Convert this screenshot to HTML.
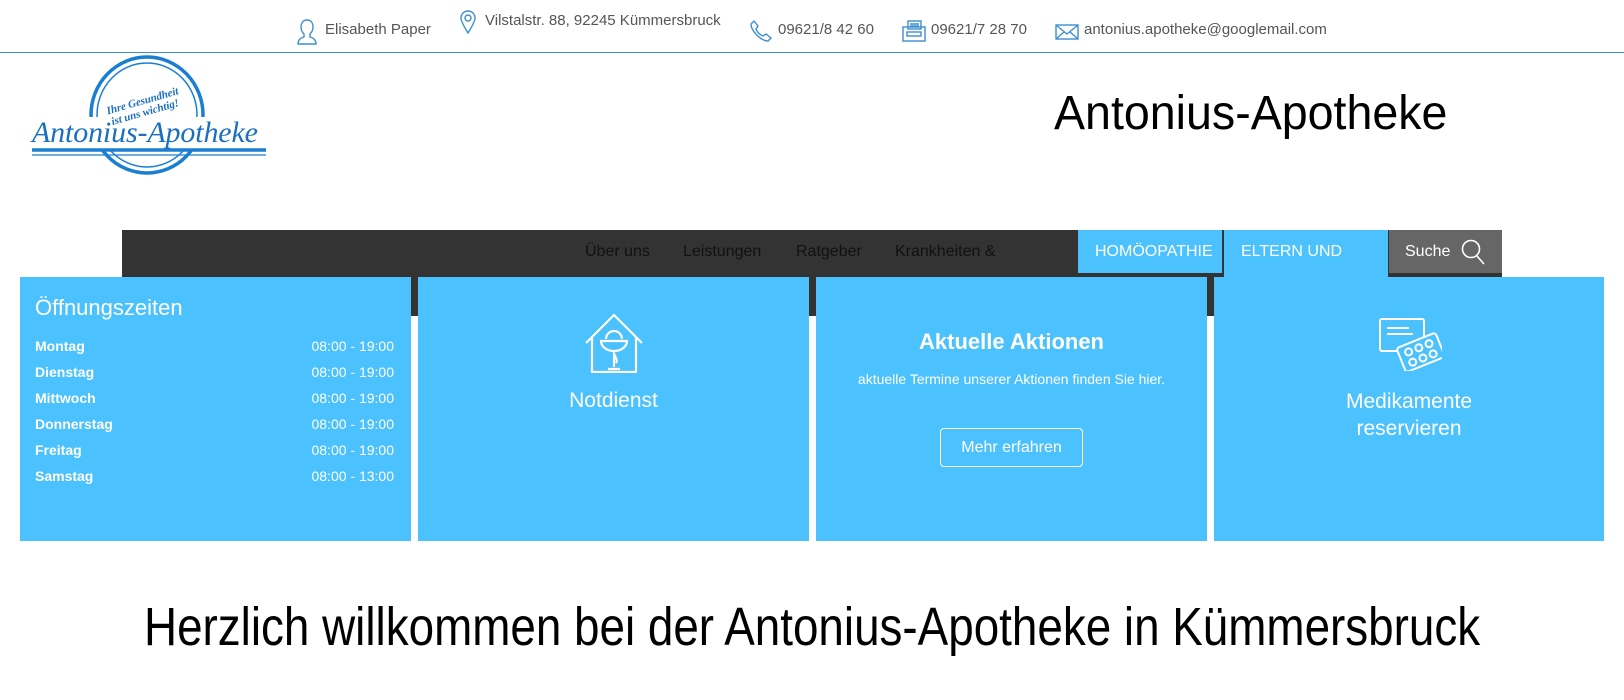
<!DOCTYPE html>
<html><head><meta charset="utf-8"><style>
*{margin:0;padding:0;box-sizing:border-box}
body{width:1624px;height:700px;overflow:hidden;background:#fff;font-family:"Liberation Sans",sans-serif;position:relative;color:#000}
.a{position:absolute;white-space:nowrap}
.top{font-size:15px;color:#555}
.card{position:absolute;top:277px;height:264px;background:#4bc1fd;color:#fff}
.row{position:absolute;left:15px;right:17px;font-size:14px}
.row b{font-weight:bold}
.row span{position:absolute;right:0;top:0}
.nav{font-size:16px;color:#111;top:243px}
</style></head><body>
<!-- top bar -->
<svg class="a" style="left:297px;top:19px" width="20" height="26" viewBox="0 0 20 26" fill="none" stroke="#3d8fd0" stroke-width="1.4"><path d="M10 1c-4 0-6 3-6 7 0 3 1 5 3 7v3c-4 1-6 3-6 7h18c0-4-2-6-6-7v-3c2-2 3-4 3-7 0-4-2-7-6-7z"/></svg>
<div class="a top" style="left:325px;top:21px">Elisabeth Paper</div>
<svg class="a" style="left:459px;top:10px" width="18" height="24" viewBox="0 0 18 24" fill="none" stroke="#3d8fd0" stroke-width="1.4"><path d="M9 23C4 15 2 11 2 8a7 7 0 0 1 14 0c0 3-2 7-7 15z"/><circle cx="9" cy="8" r="3"/></svg>
<div class="a top" style="left:485px;top:12px">Vilstalstr. 88, 92245 Kümmersbruck</div>
<svg class="a" style="left:749px;top:19px" width="24" height="24" viewBox="0 0 24 24" fill="none" stroke="#3d8fd0" stroke-width="1.4"><path d="M5 2l4 5-2 3c1 3 4 6 7 7l3-2 5 4-3 3C12 22 2 12 2 5z"/></svg>
<div class="a top" style="left:778px;top:21px">09621/8 42 60</div>
<svg class="a" style="left:902px;top:20px" width="24" height="22" viewBox="0 0 24 22" fill="none" stroke="#3d8fd0" stroke-width="1.4"><rect x="1" y="7" width="22" height="14"/><rect x="6" y="1" width="13" height="8"/><path d="M8 4h9M8 6h9"/><rect x="5" y="12" width="14" height="4"/></svg>
<div class="a top" style="left:931px;top:21px">09621/7 28 70</div>
<svg class="a" style="left:1055px;top:24px" width="24" height="16" viewBox="0 0 24 16" fill="none" stroke="#3d8fd0" stroke-width="1.4"><rect x="1" y="1" width="22" height="14"/><path d="M1 1l11 9 11-9M1 15l8-7M23 15l-8-7"/></svg>
<div class="a top" style="left:1084px;top:21px">antonius.apotheke@googlemail.com</div>
<div class="a" style="left:0;top:52px;width:1624px;height:1px;background:#3d8fd0"></div>
<!-- logo -->
<svg class="a" style="left:30px;top:55px" width="236" height="122" viewBox="0 0 236 122">
<ellipse cx="117" cy="60" rx="56" ry="58" fill="none" stroke="#1a7fd0" stroke-width="3.5"/>
<ellipse cx="117" cy="60" rx="50" ry="52" fill="none" stroke="#1a7fd0" stroke-width="1.5"/>
<rect x="0" y="62" width="236" height="32" fill="#fff"/>
<path d="M2 95h234" stroke="#1a7fd0" stroke-width="3.5"/>
<path d="M2 100h234" stroke="#1a7fd0" stroke-width="1.2"/>
<text x="75" y="50" transform="rotate(-16 110 45)" font-family="Liberation Serif,serif" font-style="italic" font-weight="bold" font-size="11" fill="#1a6fc0">Ihre Gesundheit</text>
<text x="80" y="62" transform="rotate(-16 110 57)" font-family="Liberation Serif,serif" font-style="italic" font-weight="bold" font-size="11" fill="#1a6fc0">ist uns wichtig!</text>
<text x="2" y="87" font-family="Liberation Serif,serif" font-style="italic" font-size="30" fill="#1a6fc0" textLength="226">Antonius-Apotheke</text>
</svg>
<div class="a" style="left:1054px;top:86px;font-size:48px;transform:scaleX(0.97);transform-origin:left">Antonius-Apotheke</div>
<!-- nav -->
<div class="a" style="left:122px;top:230px;width:1380px;height:86px;background:#333"></div>
<div class="a nav" style="left:585px">Über uns</div>
<div class="a nav" style="left:683px">Leistungen</div>
<div class="a nav" style="left:796px">Ratgeber</div>
<div class="a nav" style="left:895px">Krankheiten &amp;</div>
<div class="a" style="left:1078px;top:230px;width:144px;height:43px;background:#4bc1fd"></div>
<div class="a" style="left:1095px;top:243px;font-size:16px;color:#fff">HOMÖOPATHIE</div>
<div class="a" style="left:1224px;top:230px;width:164px;height:50px;background:#4bc1fd"></div>
<div class="a" style="left:1241px;top:243px;font-size:16px;color:#fff">ELTERN UND</div>
<div class="a" style="left:1389px;top:230px;width:113px;height:43px;background:#666"></div>
<div class="a" style="left:1405px;top:243px;font-size:16px;color:#fff">Suche</div>
<svg class="a" style="left:1461px;top:239px" width="24" height="26" viewBox="0 0 24 26" fill="none" stroke="#fff" stroke-width="1.6"><circle cx="10" cy="10" r="8.5"/><path d="M16 17l7 8"/></svg>
<!-- cards -->
<div class="card" style="left:20px;width:391px">
<div class="a" style="left:15px;top:18px;font-size:22px;font-weight:300">Öffnungszeiten</div>
<div class="row" style="top:61px"><b>Montag</b><span>08:00 - 19:00</span></div>
<div class="row" style="top:87px"><b>Dienstag</b><span>08:00 - 19:00</span></div>
<div class="row" style="top:113px"><b>Mittwoch</b><span>08:00 - 19:00</span></div>
<div class="row" style="top:139px"><b>Donnerstag</b><span>08:00 - 19:00</span></div>
<div class="row" style="top:165px"><b>Freitag</b><span>08:00 - 19:00</span></div>
<div class="row" style="top:191px"><b>Samstag</b><span>08:00 - 13:00</span></div>
</div>
<div class="card" style="left:418px;width:391px">
<svg class="a" style="left:166px;top:36px" width="60" height="60" viewBox="0 0 60 60" fill="none" stroke="#fff" stroke-width="2.2"><path d="M2 30L30 2l28 28"/><path d="M8 24v35h44V24"/><path d="M22 26a8 8 0 1 1 16 0"/><path d="M17 28h26a13 10 0 0 1-26 0z"/><path d="M30 38v16M24 56h12M32 42c-3 2 3 4 0 8"/></svg>
<div class="a" style="left:0;width:391px;text-align:center;top:112px;font-size:21px;font-weight:300">Notdienst</div>
</div>
<div class="card" style="left:816px;width:391px">
<div class="a" style="left:0;width:391px;text-align:center;top:52px;font-size:22px;font-weight:bold">Aktuelle Aktionen</div>
<div class="a" style="left:0;width:391px;text-align:center;top:94px;font-size:14px">aktuelle Termine unserer Aktionen finden Sie hier.</div>
<div class="a" style="left:124px;top:151px;width:143px;height:39px;border:1px solid #fff;border-radius:4px;text-align:center;line-height:37px;font-size:16px">Mehr erfahren</div>
</div>
<div class="card" style="left:1214px;width:390px">
<svg class="a" style="left:164px;top:40px" width="64" height="54" viewBox="0 0 64 54" fill="none" stroke="#fff" stroke-width="2"><rect x="2" y="2" width="44" height="32" rx="2"/><path d="M9 11h22M9 17h26"/><g transform="rotate(-22 44 36)"><rect x="22" y="22" width="42" height="26" rx="3" fill="#4bc1fd"/><circle cx="32" cy="30" r="3.5"/><circle cx="43" cy="30" r="3.5"/><circle cx="54" cy="30" r="3.5"/><circle cx="32" cy="41" r="3.5"/><circle cx="43" cy="41" r="3.5"/><circle cx="54" cy="41" r="3.5"/></g></svg>
<div class="a" style="left:0;width:390px;text-align:center;top:111px;font-size:21px;font-weight:300;line-height:27px">Medikamente<br>reservieren</div>
</div>
<div class="a" style="left:144px;top:596px;font-size:54px;transform:scaleX(0.848);transform-origin:left">Herzlich willkommen bei der Antonius-Apotheke in Kümmersbruck</div>
</body></html>
